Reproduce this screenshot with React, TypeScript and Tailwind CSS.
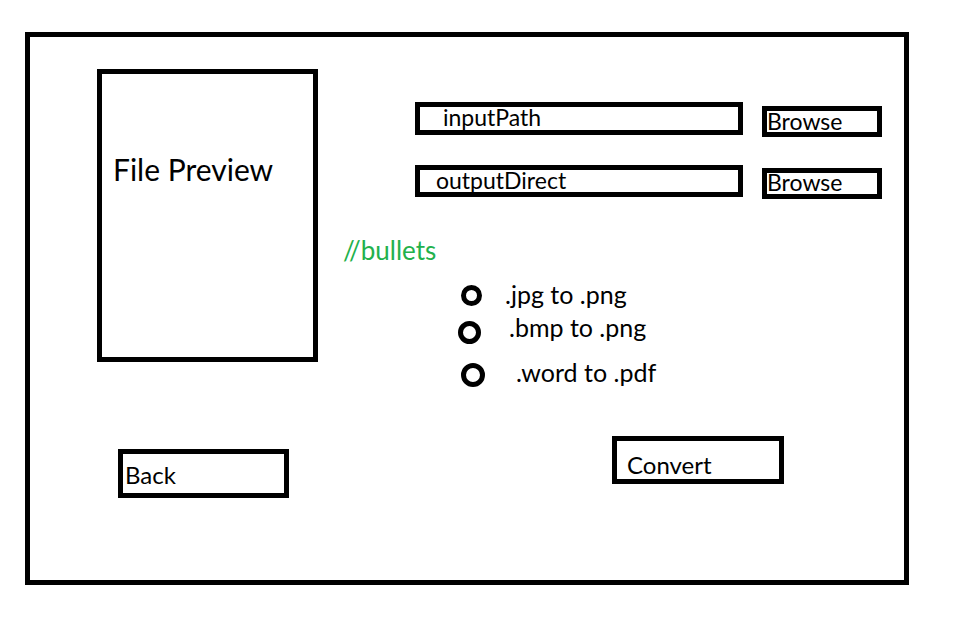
import React from "react";

const font = { fontFamily: "Lato, 'Open Sans', sans-serif" };

function Radio({ ml, mt, size, label, textMl }: { ml: string; mt: string; size: string; label: string; textMl: string }) {
  return (
    <div className="flex items-start">
      <span className={`${ml} ${mt} ${size} rounded-full border-[5px] border-black shrink-0`} />
      <span className={`${textMl} text-[25px] leading-none text-black whitespace-nowrap`}>{label}</span>
    </div>
  );
}

export default function App() {
  return (
    <div className="w-[964px] h-[642px] bg-white pt-[32px] pl-[25px]" style={font}>
      <div className="w-[884px] h-[553px] border-[5px] border-black flex">
        {/* Left column */}
        <div className="flex flex-col ml-[67px] mt-[32px] w-[221px] shrink-0">
          <div className="h-[293px] border-[5px] border-black pl-[11px] pt-[80px]">
            <span className="text-[30px] leading-none text-black whitespace-nowrap">File Preview</span>
          </div>
          <button className="ml-[21px] mt-[87px] w-[171px] h-[49px] border-[5px] border-black pl-[2px] pt-[9px] flex items-start text-left">
            <span className="text-[24px] leading-none text-black">Back</span>
          </button>
        </div>

        {/* Right section */}
        <div className="flex flex-col ml-[25px]">
          <div className="ml-[72px] mt-[65px] flex flex-col">
            <div className="flex items-start">
              <div className="w-[328px] h-[33px] border-[5px] border-black pl-[23px] flex items-start overflow-hidden">
                <span className="text-[23px] leading-none text-black -mt-[1px]">inputPath</span>
              </div>
              <button className="ml-[19px] mt-[4px] w-[120px] h-[31px] border-[5px] border-black flex items-start text-left overflow-hidden">
                <span className="text-[23px] leading-none text-black -mt-[1px]">Browse</span>
              </button>
            </div>
            <div className="flex items-start mt-[28px]">
              <div className="w-[328px] h-[32px] border-[5px] border-black pl-[16px] flex items-start overflow-hidden">
                <span className="text-[23px] leading-none text-black -mt-[1px]">outputDirect</span>
              </div>
              <button className="ml-[19px] mt-[3px] w-[120px] h-[31px] border-[5px] border-black flex items-start text-left overflow-hidden">
                <span className="text-[23px] leading-none text-black -mt-[2px]">Browse</span>
              </button>
            </div>
          </div>

          <div className="mt-[38px] text-[26px] leading-none text-[#22b14c]">//bullets</div>

          <div className="flex flex-col">
            <div className="mt-[19px]">
              <Radio ml="ml-[118px]" mt="mt-[3px]" size="w-[21px] h-[21px]" label=".jpg to .png" textMl="ml-[23px]" />
            </div>
            <div className="mt-[8px]">
              <Radio ml="ml-[115px]" mt="mt-[6px]" size="w-[23px] h-[23px]" label=".bmp to .png" textMl="ml-[28px]" />
            </div>
            <div className="mt-[16px]">
              <Radio ml="ml-[118px]" mt="mt-[3px]" size="w-[24px] h-[24px]" label=".word to .pdf" textMl="ml-[31px]" />
            </div>
          </div>

          <button className="ml-[269px] mt-[49px] w-[172px] h-[48px] border-[5px] border-black pl-[10px] pt-[12px] flex items-start text-left">
            <span className="text-[24px] leading-none text-black">Convert</span>
          </button>
        </div>
      </div>
    </div>
  );
}
